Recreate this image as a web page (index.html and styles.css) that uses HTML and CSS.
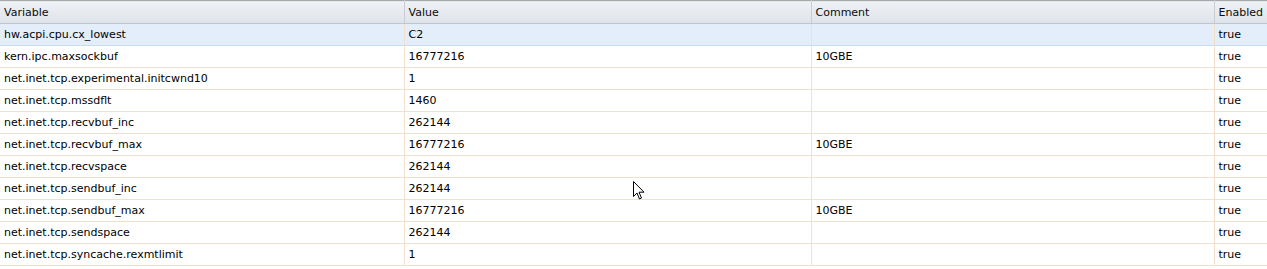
FILE: index.html
```html
<!DOCTYPE html>
<html>
<head>
<meta charset="utf-8">
<link rel="stylesheet" href="styles.css">
</head>
<body>
<div class="grid">
  <table class="tbl">
    <colgroup>
      <col class="c1"><col class="c2"><col class="c3"><col class="c4">
    </colgroup>
    <thead>
      <tr><th>Variable</th><th>Value</th><th>Comment</th><th>Enabled</th></tr>
    </thead>
    <tbody>
      <tr class="sel"><td>hw.acpi.cpu.cx_lowest</td><td>C2</td><td></td><td>true</td></tr>
      <tr><td>kern.ipc.maxsockbuf</td><td>16777216</td><td>10GBE</td><td>true</td></tr>
      <tr><td>net.inet.tcp.experimental.initcwnd10</td><td>1</td><td></td><td>true</td></tr>
      <tr><td>net.inet.tcp.mssdflt</td><td>1460</td><td></td><td>true</td></tr>
      <tr><td>net.inet.tcp.recvbuf_inc</td><td>262144</td><td></td><td>true</td></tr>
      <tr><td>net.inet.tcp.recvbuf_max</td><td>16777216</td><td>10GBE</td><td>true</td></tr>
      <tr><td>net.inet.tcp.recvspace</td><td>262144</td><td></td><td>true</td></tr>
      <tr><td>net.inet.tcp.sendbuf_inc</td><td>262144</td><td></td><td>true</td></tr>
      <tr><td>net.inet.tcp.sendbuf_max</td><td>16777216</td><td>10GBE</td><td>true</td></tr>
      <tr><td>net.inet.tcp.sendspace</td><td>262144</td><td></td><td>true</td></tr>
      <tr><td>net.inet.tcp.syncache.rexmtlimit</td><td>1</td><td></td><td>true</td></tr>
    </tbody>
  </table>
  <svg class="cursor" width="12" height="20" viewBox="0 0 12 20" xmlns="http://www.w3.org/2000/svg">
    <path d="M0.5 0.5 L0.5 15.5 L4 12 L6.5 18 L8.5 17 L6 11.2 L11 11.2 Z" fill="#fff" stroke="#000" stroke-width="1" stroke-linejoin="miter"/>
  </svg>
</div>
</body>
</html>
```

FILE: styles.css
```css
html, body {
  margin: 0;
  padding: 0;
  background: #ffffff;
}

.grid {
  position: relative;
  width: 1267px;
}

.tbl {
  width: 1267px;
  table-layout: fixed;
  border-collapse: collapse;
  font-family: "DejaVu Sans", Verdana, sans-serif;
  font-size: 11px;
  color: #000;
}

.c1 { width: 404px; }
.c2 { width: 407px; }
.c3 { width: 403px; }
.c4 { width: 53px; }

.tbl th {
  height: 23px;
  padding: 0 3px 0 4px;
  text-align: left;
  font-weight: normal;
  color: #0a0a0a;
  background: linear-gradient(#eef1f5, #dfe4ea);
  border-top: 1px solid #a7a7a7;
  border-bottom: 1px solid #c2c6cb;
  border-right: 1px solid #c9cdd2;
  white-space: nowrap;
  overflow: hidden;
  box-sizing: border-box;
}

.tbl td {
  height: 21px;
  padding: 0 3px 0 4px;
  border-bottom: 1px solid #f3dfcb;
  border-right: 1px solid #f3dfcb;
  white-space: nowrap;
  overflow: hidden;
}

.tbl tr.sel td {
  background: #e3eefa;
  border-bottom-color: #c9dcee;
}

.tbl th:last-child,
.tbl td:last-child {
  border-right: none;
}

.cursor {
  position: absolute;
  left: 633px;
  top: 181px;
}
```
